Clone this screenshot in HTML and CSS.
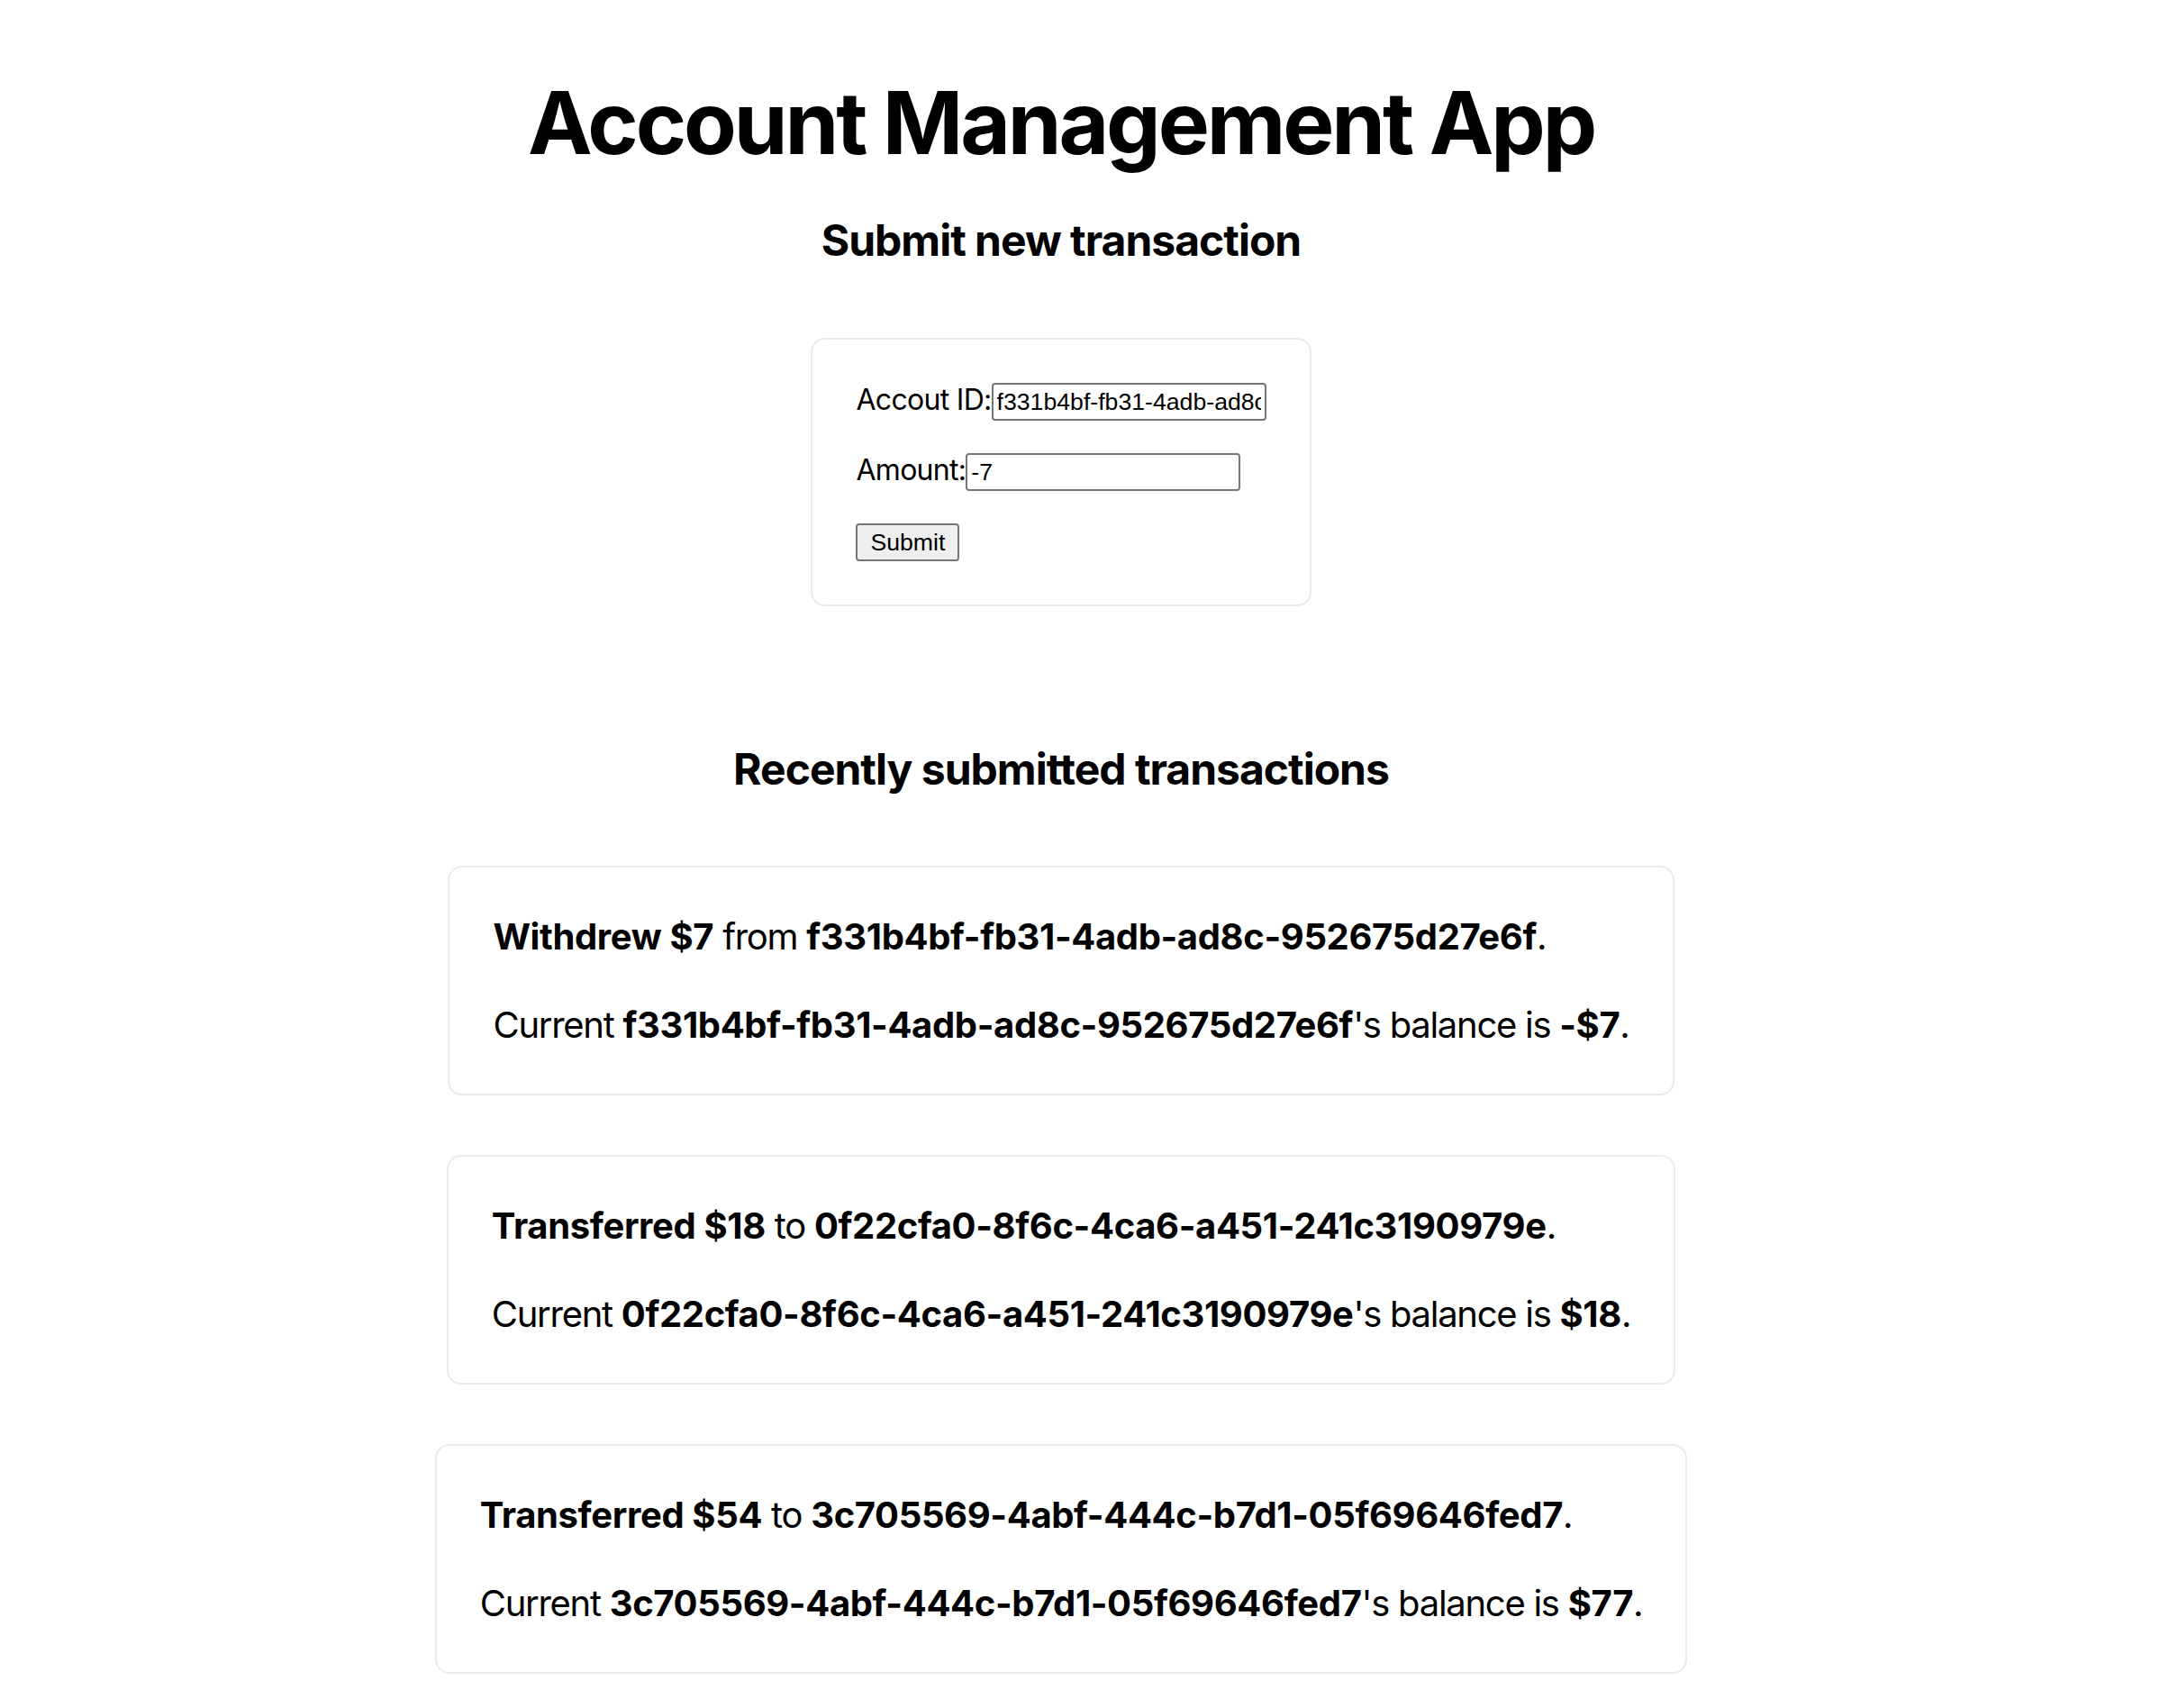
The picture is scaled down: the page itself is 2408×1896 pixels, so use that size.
FILE: index.html
```html
<!DOCTYPE html>
<html lang="en">
<head>
<meta charset="utf-8">
<title>Account Management App</title>
<link rel="stylesheet" href="styles.css">
</head>
<body>
<div class="page">
  <h1 class="title">Account Management App</h1>
  <h2 class="section-title submit-title">Submit new transaction</h2>
  <form class="tx-form">
    <div class="form-row">
      <label class="form-label" for="account">Accout ID:</label><input class="form-input" id="account" type="text" value="f331b4bf-fb31-4adb-ad8c-952675d27e6f">
    </div>
    <div class="form-row">
      <label class="form-label" for="amount">Amount:</label><input class="form-input" id="amount" type="text" value="-7">
    </div>
    <div class="form-row">
      <button class="form-button" type="button">Submit</button>
    </div>
  </form>
  <h2 class="section-title recent-title">Recently submitted transactions</h2>
  <div class="tx-list">
    <div class="tx-card">
      <p class="tx-line"><b>Withdrew $7</b> from <b>f331b4bf-fb31-4adb-ad8c-952675d27e6f</b>.</p>
      <p class="tx-line">Current <b>f331b4bf-fb31-4adb-ad8c-952675d27e6f</b>'s balance is <b>-$7</b>.</p>
    </div>
    <div class="tx-card">
      <p class="tx-line"><b>Transferred $18</b> to <b>0f22cfa0-8f6c-4ca6-a451-241c3190979e</b>.</p>
      <p class="tx-line">Current <b>0f22cfa0-8f6c-4ca6-a451-241c3190979e</b>'s balance is <b>$18</b>.</p>
    </div>
    <div class="tx-card">
      <p class="tx-line"><b>Transferred $54</b> to <b>3c705569-4abf-444c-b7d1-05f69646fed7</b>.</p>
      <p class="tx-line">Current <b>3c705569-4abf-444c-b7d1-05f69646fed7</b>'s balance is <b>$77</b>.</p>
    </div>
  </div>
</div>
</body>
</html>
```
FILE: styles.css
```css
html, body {
  margin: 0;
  padding: 0;
  background: #ffffff;
}
body {
  font-family: Inter, "Noto Sans", sans-serif;
  color: #000000;
}
.page {
  width: 2356px;
  padding-top: 78px;
  padding-bottom: 40px;
  display: flex;
  flex-direction: column;
  align-items: center;
}
.title {
  margin: 0;
  font-size: 96px;
  line-height: 116px;
  font-weight: 700;
  letter-spacing: -3.1px;
}
.section-title {
  margin: 0;
  font-size: 48px;
  line-height: 58px;
  font-weight: 700;
  letter-spacing: -1px;
}
.submit-title {
  margin-top: 44px;
}
.recent-title {
  margin-top: 152px;
}
.tx-form {
  margin-top: 79px;
  border: 2px solid #ebebeb;
  border-radius: 16px;
  padding: 48px;
  display: flex;
  flex-direction: column;
  gap: 36px;
}
.form-row {
  display: flex;
  align-items: baseline;
}
.form-label {
  font-size: 32px;
  line-height: 1;
  letter-spacing: -0.7px;
}
.form-input {
  font-family: "Liberation Sans", Arial, sans-serif;
  font-size: 26.67px;
  width: 305px;
  height: 42px;
  box-sizing: border-box;
  padding: 2px 4px;
  margin: 0;
  border: 2px solid #767676;
  border-radius: 4px;
  color: #000;
  background: #fff;
}
.form-button {
  font-family: "Liberation Sans", Arial, sans-serif;
  font-size: 26.67px;
  height: 42px;
  width: 115px;
  box-sizing: border-box;
  padding: 2px 12px;
  margin: 0;
  border: 2px solid #767676;
  border-radius: 4px;
  background: #efefef;
  color: #000;
}
.tx-list {
  margin-top: 78px;
  display: flex;
  flex-direction: column;
  align-items: center;
  gap: 66px;
}
.tx-card {
  border: 2px solid #ebebeb;
  border-radius: 16px;
  padding: 48px;
}
.tx-line {
  margin: 0;
  font-size: 40px;
  line-height: 57.5px;
  white-space: nowrap;
  letter-spacing: -1.28px;
}
.tx-line + .tx-line {
  margin-top: 40px;
}
.tx-line b {
  font-weight: 700;
  letter-spacing: -0.36px;
}
```
